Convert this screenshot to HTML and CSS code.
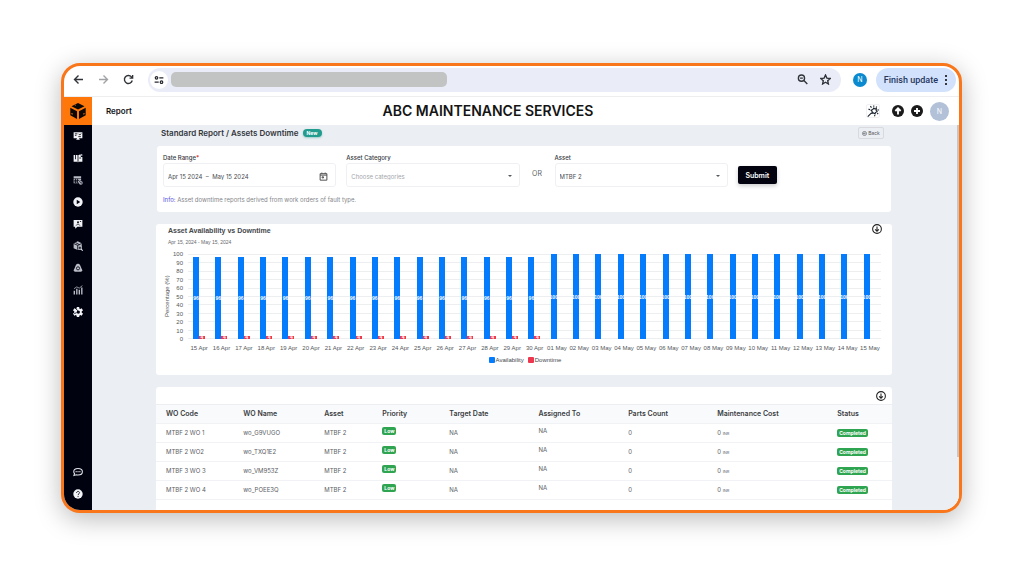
FILE: index.html
```html
<!DOCTYPE html>
<html lang="en">
<head>
  <meta charset="UTF-8">
  <meta name="viewport" content="width=device-width, initial-scale=1.0">
  <title>Assets Downtime Report</title>
  <link rel="stylesheet" href="styles.css">
</head>
<body>
  <div class="window">
    <div class="browser-bar">
      <button class="nav-btn" aria-label="Back"><svg viewBox="0 0 16 16"><path d="M14.5 8H2.5M8 2.2 2.2 8 8 13.8"/></svg></button>
      <button class="nav-btn muted" aria-label="Forward"><svg viewBox="0 0 16 16"><path d="M1.5 8h12M8 2.2 13.8 8 8 13.8"/></svg></button>
      <button class="nav-btn" aria-label="Reload"><svg viewBox="0 0 16 16"><path d="M13.5 9.5A5.8 5.8 0 1 1 12.3 4.2L14 6M14 1.5V6H9.5"/></svg></button>
      <div class="address">
        <button class="site-info" aria-label="Site information"><svg viewBox="0 0 16 16"><circle cx="4" cy="4.5" r="2"/><path d="M8.5 4.5H15M1 11.5h6.5"/><circle cx="12" cy="11.5" r="2"/></svg></button>
        <div class="url"></div>
        <button class="nav-btn" aria-label="Zoom"><svg viewBox="0 0 16 16"><circle cx="6.5" cy="6" r="4.5"/><path d="M10 9.5l5 5M4.5 6h4"/></svg></button>
        <button class="nav-btn star" aria-label="Bookmark"><svg viewBox="0 0 16 16"><path d="M8 1.5l2 4.5 4.8.5-3.6 3.2 1 4.8L8 12l-4.2 2.5 1-4.8L1.2 6.5 6 6z"/></svg></button>
      </div>
      <button class="profile">N</button>
      <button class="update">Finish update <svg viewBox="0 0 4 12"><circle cx="2" cy="2" r="1"/><circle cx="2" cy="6" r="1"/><circle cx="2" cy="10" r="1"/></svg></button>
    </div>

    <div class="app">
      <nav class="sidebar">
        <a href="#" class="logo" aria-label="Home"><svg viewBox="0 0 16 16"><path d="M8 0l6.5 3.2L8 6.6 1.5 3.2zM.3 4.8l6.700 3.5V16L.3 12.3zM15.7 4.8L9 8.3V16l6.700-3.700z"/><path class="cut" d="M4.500 2.500l1.500-1 0 1zM1 10.500l1.600-.6L2.400 12zM15 10.500l-1.600-.6.2 2.100z"/></svg></a>
        <a href="#" aria-label="Dashboard"><svg viewBox="0 0 16 16"><path d="M1 2h14v9.500H9.500L11 14H5l1.500-2.500H1z"/><path class="ink" d="M3 4.500h4M3 7h2.500M9 4.500l2 2 2-2.500M8.500 9h4"/></svg></a>
        <a href="#" aria-label="Work orders"><svg viewBox="0 0 16 16"><path d="M1 3h5l2 1 3-1.500h1.500v4H15V14H9l-1 1-1-1H1zM13 1l2.500 2-2 2z"/><path class="ink" d="M4 3v7M8 4v10M10 8h3"/></svg></a>
        <a href="#" class="dim" aria-label="Schedule"><svg viewBox="0 0 16 16"><path d="M1 2h12v3H1zM1 6h12v3a3.500 3.500 0 0 0-4 4H1z"/><circle cx="12.500" cy="12.500" r="3"/><path class="ink" d="M1 8.500h9M1 11h7M4 6v7M7 6v7M12.500 11v2h1.500"/></svg></a>
        <a href="#" aria-label="Start"><svg viewBox="0 0 16 16"><circle cx="8" cy="8" r="7.500"/><path class="hole" d="M6 4.500v7l5.500-3.500z"/></svg></a>
        <a href="#" aria-label="Requests"><svg viewBox="0 0 16 16"><path d="M1 1.500h14v11H7L3.500 15.500v-3H1z"/><circle class="hole" cx="8" cy="5" r="1.500"/><path class="ink" d="M5 10.500l3-3 3 3M11 4h2"/></svg></a>
        <a href="#" class="dim" aria-label="Assets"><svg viewBox="0 0 16 16"><path d="M7.500.5l6.500 3v5.500l-4 4-2.500 1.500-6.500-3V4z"/><circle cx="11" cy="11" r="3.500"/><path class="ink" d="M1 4l6.500 3L14 4M7.500 7v7M4 2.500L10.500 6M11 9v4M9 11h4"/><path class="line" d="M13 13l2.500 2.500"/></svg></a>
        <a href="#" class="dim" aria-label="Alerts"><svg viewBox="0 0 16 16"><path d="M8 1c3 0 4 3.500 5 6 .8 2 2 3.500 2 5.500L13 14H3l-2-1.500C1 10.500 2.200 9 3 7c1-2.500 2-6 5-6z"/><circle class="ink" cx="8" cy="8.500" r="2.500"/></svg></a>
        <a href="#" class="dim" aria-label="Reports"><svg viewBox="0 0 16 16"><path d="M1 9h2.200v6H1zM5 6h2.200v9H5zM9 7.500h2.200V15H9zM13 4h2.200v11H13z"/><path class="line thin" d="M1.500 6L6 3l4 2 5-4"/></svg></a>
        <a href="#" aria-label="Settings"><svg viewBox="0 0 16 16"><path d="M6 0h4v2.200l1.800 1L14 2l2 3.500-2 1.300v2.400l2 1.300-2 3.500-2.200-1.200-1.800 1V16H6v-2.200l-1.800-1L2 14 0 10.500l2-1.300V6.800L0 5.500 2 2l2.200 1.200 1.800-1z"/><circle class="hole" cx="8.500" cy="8" r="2.600"/><path class="ink" d="M8 6L4.500 3M6 9l-4 1.500"/></svg></a>
        <a href="#" class="push" aria-label="Chat"><svg viewBox="0 0 16 16"><path class="line" d="M8 2.500c4 0 7 2 7 5s-3 5.300-7 5.300c-1 0-2 0-2.800-.4L1.500 13.500l1-3C1.500 9.500 1.200 8.500 1.200 7.500c0-3 2.800-5 6.800-5z"/><circle cx="5" cy="7.500" r="1"/><circle cx="8" cy="7.500" r="1"/><circle cx="11" cy="7.500" r="1"/></svg></a>
        <a href="#" aria-label="Help"><svg viewBox="0 0 16 16"><circle cx="8" cy="8" r="7.500"/><path class="ink" d="M5.700 6.200C5.700 3 10.500 3.200 10.400 6c0 1.600-2.300 1.700-2.300 3.600M8.100 11v2"/></svg></a>
      </nav>

      <div class="page">
        <header class="topbar">
          <h2>Report</h2>
          <h1>ABC MAINTENANCE SERVICES</h1>
          <div class="actions">
            <button class="theme" aria-label="Theme"><svg viewBox="0 0 16 16"><path d="M9 4l1.500 1.200 2-.2-.3 2L13.500 9l-2 .8-.8 2L9 10.500l-2.200.6.200-2.300L5.500 7l2.200-.8zM9 .5v1.800M13 2l-1 1.500M15.700 6.500l-1.700.3M15 12l-1.500-1M10.500 15l-.4-1.700M4.500 1.500L6 3.500M2 5.500l2 .8M6 10.500L1 15.500"/></svg></button>
            <button class="round" aria-label="Upload"><svg viewBox="0 0 16 16"><circle cx="8" cy="8" r="8"/><path d="M8 12.500V5M4.500 8L8 4.500 11.500 8"/></svg></button>
            <button class="round" aria-label="Add"><svg viewBox="0 0 16 16"><circle cx="8" cy="8" r="8"/><path d="M8 4v8M4 8h8"/></svg></button>
            <button class="avatar">N</button>
          </div>
        </header>

        <main class="content">
          <div class="title-row">
            <h3>Standard Report / Assets Downtime</h3>
            <span class="badge new">New</span>
            <button class="back"><svg viewBox="0 0 16 16"><circle cx="8" cy="8" r="6.500"/><path d="M11.500 8H5M8 5L5 8l3 3"/></svg>Back</button>
          </div>

          <form class="card filters">
            <div class="fields">
              <div class="field">
                <label for="range">Date Range<b>*</b></label>
                <div class="box">
                  <input id="range" type="text" value="Apr 15 2024  –  May 15 2024">
                  <svg class="calendar" viewBox="0 0 16 16"><path d="M2 3h12v11.500H2zM2 5.500h12M5 1v2M11 1v2"/><path d="M5.500 8.500h2.500v2H5.500z"/></svg>
                </div>
              </div>
              <div class="field">
                <label for="category">Asset Category</label>
                <div class="box">
                  <select id="category" class="placeholder"><option>Choose categories</option></select>
                  <span class="caret"></span>
                </div>
              </div>
              <span class="or">OR</span>
              <div class="field">
                <label for="asset">Asset</label>
                <div class="box">
                  <select id="asset"><option>MTBF 2</option></select>
                  <span class="caret"></span>
                </div>
              </div>
              <button class="submit" type="button">Submit</button>
            </div>
            <p class="info"><em>Info:</em> Asset downtime reports derived from work orders of fault type.</p>
          </form>

          <section class="card chart-card">
            <div class="chart-head">
              <h4>Asset Availability vs Downtime</h4>
              <button class="download" aria-label="Download chart"><svg viewBox="0 0 16 16"><circle cx="8" cy="8" r="7"/><path d="M8 4v7M5 8.500l3 3 3-3"/></svg></button>
            </div>
            <p class="period">Apr 15, 2024 - May 15, 2024</p>
            <div class="chart">
              <span class="axis-title">Percentage (%)</span>
              <div class="y-axis" id="yAxis"></div>
              <div class="plot">
                <div class="grid-lines" id="gridLines"></div>
                <div class="columns" id="columns"></div>
              </div>
              <div class="x-axis" id="xAxis"></div>
            </div>
            <div class="legend">
              <span><i class="up"></i>Availability</span>
              <span><i class="down"></i>Downtime</span>
            </div>
          </section>

          <section class="card table-card">
            <div class="table-head">
              <button class="download" aria-label="Download table"><svg viewBox="0 0 16 16"><circle cx="8" cy="8" r="7"/><path d="M8 4v7M5 8.500l3 3 3-3"/></svg></button>
            </div>
            <table>
              <thead>
                <tr>
                  <th class="c-code">WO Code</th>
                  <th class="c-name">WO Name</th>
                  <th class="c-asset">Asset</th>
                  <th class="c-priority">Priority</th>
                  <th class="c-target">Target Date</th>
                  <th class="c-assigned">Assigned To</th>
                  <th class="c-parts">Parts Count</th>
                  <th class="c-cost">Maintenance Cost</th>
                  <th class="c-status">Status</th>
                </tr>
              </thead>
              <tbody>
                <tr><td>MTBF 2 WO 1</td><td>wo_G9VUGO</td><td>MTBF 2</td><td class="raised"><span class="badge">Low</span></td><td>NA</td><td class="raised">NA</td><td>0</td><td>0 <small>INR</small></td><td><span class="badge">Completed</span></td></tr>
                <tr><td>MTBF 2 WO2</td><td>wo_TXQ1E2</td><td>MTBF 2</td><td class="raised"><span class="badge">Low</span></td><td>NA</td><td class="raised">NA</td><td>0</td><td>0 <small>INR</small></td><td><span class="badge">Completed</span></td></tr>
                <tr><td>MTBF 3 WO 3</td><td>wo_VM953Z</td><td>MTBF 2</td><td class="raised"><span class="badge">Low</span></td><td>NA</td><td class="raised">NA</td><td>0</td><td>0 <small>INR</small></td><td><span class="badge">Completed</span></td></tr>
                <tr><td>MTBF 2 WO 4</td><td>wo_POEE3Q</td><td>MTBF 2</td><td class="raised"><span class="badge">Low</span></td><td>NA</td><td class="raised">NA</td><td>0</td><td>0 <small>INR</small></td><td><span class="badge">Completed</span></td></tr>
              </tbody>
            </table>
          </section>
        </main>
      </div>
    </div>
  </div>

  <script src="script.js"></script>
</body>
</html>
```
FILE: styles.css
```css
* {
  box-sizing: border-box;
}

body {
  margin: 0;
  height: 100vh;
  padding: 63px 62px 63px 61px;
  font-family: Inter, "Open Sans", sans-serif;
  font-size: 6px;
  color: #33373d;
  background-color: #fff;
}

h1, h2, h3, h4, p {
  margin: 0;
}

button {
  display: flex;
  align-items: center;
  justify-content: center;
  padding: 0;
  border: 0;
  background: none;
  font-family: inherit;
  cursor: pointer;
}

svg {
  display: block;
}

.window {
  height: 100%;
  display: flex;
  flex-direction: column;
  overflow: hidden;
  border: 3px solid #f9761a;
  border-radius: 19px;
  background-color: #fff;
  box-shadow: 0 6px 26px rgba(0, 0, 0, 0.27);
}

/* Browser toolbar */
.browser-bar {
  display: flex;
  align-items: center;
  flex-shrink: 0;
  height: 31px;
  padding: 0 3px 3px 9px;
  border-bottom: 1px solid #eeeef0;
}

.nav-btn {
  width: 11px;
  height: 11px;
  margin-right: 14px;
}

.nav-btn svg {
  width: 11px;
  height: 11px;
  fill: none;
  stroke: #303338;
  stroke-width: 2;
}

.nav-btn.muted svg {
  stroke: #a2a3a6;
}

.address {
  display: flex;
  align-items: center;
  flex: 1;
  height: 24px;
  padding-left: 2px;
  border-radius: 12px;
  background-color: #eaedf8;
}

.site-info {
  width: 18px;
  height: 18px;
  border-radius: 50%;
  background-color: #fff;
}

.site-info svg {
  width: 10px;
  height: 10px;
  fill: none;
  stroke: #25282d;
  stroke-width: 2;
}

.url {
  width: 40%;
  height: 15px;
  margin: 0 auto 0 3px;
  border-radius: 5px;
  background-color: #c2c4c3;
}

.address .nav-btn {
  margin-right: 12px;
}

.address .star {
  margin-right: 10px;
}

.profile {
  width: 14px;
  height: 14px;
  margin: 0 9px 0 12px;
  border-radius: 50%;
  background-color: #0b8ad0;
  color: #fff;
  font-size: 7px;
}

.update {
  gap: 6px;
  height: 24px;
  padding: 0 8px;
  border-radius: 12px;
  background-color: #d3e2fc;
  color: #25375e;
  font-family: Roboto, sans-serif;
  font-size: 9px;
  font-weight: 500;
}

.update svg {
  width: 4px;
  height: 12px;
}

/* App shell */
.app {
  display: flex;
  flex: 1;
  min-height: 0;
}

.sidebar {
  display: flex;
  flex-direction: column;
  flex-shrink: 0;
  width: 28px;
  padding-bottom: 5px;
  background-color: #01020f;
}

.sidebar a {
  display: flex;
  align-items: center;
  justify-content: center;
  height: 22px;
}

.sidebar svg {
  width: 10px;
  height: 10px;
  fill: #f1f3f7;
}

.sidebar .dim svg {
  fill: #b9bdc6;
}

.sidebar .ink {
  fill: none;
  stroke: #01020f;
  stroke-width: 1.3;
}

.sidebar .hole {
  fill: #01020f;
}

.sidebar .line {
  fill: none;
  stroke: #e4e6eb;
  stroke-width: 1.7;
}

.sidebar .thin {
  stroke-width: 1;
}

.sidebar .push {
  margin-top: auto;
}

.sidebar .logo {
  height: 28px;
  background-color: #ff7708;
}

.sidebar .logo svg {
  width: 16px;
  height: 16px;
  fill: #0b0806;
}

.sidebar .logo .cut {
  fill: #ff7708;
}

.page {
  display: flex;
  flex-direction: column;
  flex: 1;
  min-width: 0;
}

.topbar {
  display: grid;
  grid-template-columns: 7fr auto 9fr;
  align-items: center;
  flex-shrink: 0;
  height: 28px;
  padding: 0 10px 0 14px;
  color: #141414;
}

.topbar h2 {
  font-size: 8px;
  font-weight: 600;
}

.topbar h1 {
  font-size: 14px;
  font-weight: 600;
  line-height: 18px;
}

.actions {
  display: flex;
  align-items: center;
  justify-content: flex-end;
  gap: 7px;
}

.theme {
  width: 14px;
  height: 14px;
  margin-right: 5px;
  border: 1px solid #f1f1f4;
  border-radius: 2px;
}

.theme svg {
  width: 12px;
  height: 12px;
  flex-shrink: 0;
  fill: none;
  stroke: #1c2530;
  stroke-width: 1.5;
}

.round svg {
  width: 12px;
  height: 12px;
  fill: #1b1b1b;
}

.round path {
  fill: none;
  stroke: #fff;
  stroke-width: 2.5;
}

.avatar {
  width: 19px;
  height: 19px;
  border-radius: 50%;
  background-color: #b2c1d7;
  color: #f1f5fa;
  font-size: 7px;
  font-weight: 500;
}

.content {
  flex: 1;
  min-height: 0;
  overflow: hidden;
  padding: 0 65px 0 64px;
  border-right: 2px solid #c4c7ca;
  border-image: linear-gradient(#c4c7ca 86%, #ebeef2 86%) 1;
  background-color: #ebeef2;
}

.card {
  border-radius: 3px;
  background-color: #fff;
}

.badge {
  display: inline-block;
  padding: 0 2px;
  border-radius: 2px;
  background-color: #2fa551;
  color: #fff;
  font-size: 5px;
  font-weight: 700;
  line-height: 8px;
}

/* Title and filters */
.title-row {
  display: flex;
  align-items: center;
  gap: 4px;
  height: 16px;
  padding: 0 8px 0 5px;
}

.title-row h3 {
  font-size: 8px;
  font-weight: 600;
}

.badge.new {
  padding: 0 4px;
  border-radius: 5px;
  background-color: #229c8e;
  box-shadow: 0 1px 2px rgba(34, 156, 142, 0.4);
}

.back {
  gap: 1px;
  width: 26px;
  height: 12px;
  margin-left: auto;
  border: 1px solid #d8dadd;
  border-radius: 2px;
  color: #55585d;
  font-size: 5px;
}

.back svg {
  width: 5px;
  height: 5px;
  fill: none;
  stroke: #55585d;
  stroke-width: 2;
}

.filters {
  height: 66px;
  margin: 5px 1px 12px;
  padding: 7px 6px;
}

.fields {
  display: flex;
  align-items: flex-end;
  gap: 10px;
}

.field {
  width: 24%;
}

.field label {
  display: block;
  line-height: 10px;
  font-weight: 500;
}

.field label b {
  color: #e5383b;
}

.box {
  display: flex;
  align-items: center;
  height: 24px;
  padding: 2px 7px 0 4px;
  border: 1px solid #eff0f3;
  border-radius: 3px;
}

.box input,
.box select {
  flex: 1;
  min-width: 0;
  padding: 0;
  border: 0;
  outline: 0;
  appearance: none;
  background: none;
  color: #4a4d52;
  font-family: inherit;
  font-size: 6px;
  white-space: pre;
}

.box .placeholder {
  color: #a3a6ab;
}

.calendar {
  width: 9px;
  height: 9px;
  fill: none;
  stroke: #4a4a4a;
  stroke-width: 1.7;
}

.caret {
  border: 2px solid transparent;
  border-top-color: #55585d;
  border-bottom: 0;
}

.or {
  width: 15px;
  line-height: 26px;
  color: #5c5f64;
  font-size: 7px;
  text-align: center;
}

.submit {
  width: 39px;
  height: 18px;
  margin-bottom: 3px;
  border-radius: 2px;
  background-color: #02030f;
  box-shadow: 0 2px 4px rgba(2, 3, 15, 0.2);
  color: #fff;
  font-size: 7px;
  font-weight: 600;
}

.info {
  margin-top: 8px;
  color: #83868b;
  font-size: 6px;
  line-height: 10px;
}

.info em {
  color: #5a4be0;
  font-style: normal;
}

/* Chart */
.chart-card {
  height: 151px;
  margin-bottom: 12px;
  padding: 0 10px 0 12px;
  font-family: "Liberation Sans", Arial, sans-serif;
}

.chart-head {
  display: flex;
  align-items: flex-start;
  justify-content: space-between;
  height: 14px;
}

.chart-head h4 {
  font-size: 7px;
  font-weight: 700;
  line-height: 14px;
  color: #45484c;
}

.download svg {
  width: 10px;
  height: 10px;
  fill: none;
  stroke: #222;
  stroke-width: 1.7;
}

.period {
  color: #66696d;
  font-size: 5px;
  line-height: 8px;
}

.chart {
  display: grid;
  grid-template-columns: 7px 14px 1fr;
  grid-template-rows: 85px 18px;
  margin: 8px 1px 0 -4px;
  color: #54575b;
}

.axis-title {
  writing-mode: vertical-rl;
  transform: rotate(180deg);
  text-align: center;
  line-height: 7px;
}

.y-axis {
  display: flex;
  flex-direction: column;
  justify-content: space-between;
  align-items: flex-end;
  margin: -3px 0;
  padding-right: 2px;
  font-size: 6px;
  line-height: 6px;
}

.plot {
  display: grid;
  margin-left: 3px;
}

.grid-lines,
.columns {
  grid-area: 1 / 1;
}

.grid-lines {
  display: flex;
  flex-direction: column;
  justify-content: space-between;
}

.grid-lines span {
  height: 1px;
  background-color: #eceef0;
}

.columns {
  display: flex;
}

.column {
  display: flex;
  align-items: flex-end;
  flex: 1;
  min-width: 0;
  padding-left: 5px;
}

.bar {
  display: flex;
  align-items: center;
  justify-content: center;
  width: 6px;
  overflow: hidden;
  color: #fff;
  font-size: 5px;
  font-weight: 700;
  line-height: 4px;
}

.bar.up,
.legend .up {
  background-color: #057cfb;
}

.bar.down,
.legend .down {
  background-color: #ee374f;
}

.x-axis {
  display: flex;
  grid-column: 3;
  margin-left: 3px;
}

.x-axis span {
  flex: 1;
  min-width: 0;
  text-align: center;
  white-space: nowrap;
  line-height: 19px;
}

.legend {
  display: flex;
  justify-content: center;
  gap: 4px;
  line-height: 6px;
  color: #45484c;
}

.legend span {
  display: flex;
  gap: 1px;
}

.legend i {
  width: 6px;
  height: 6px;
  border-radius: 1px;
}

/* Work orders table */
.table-card {
  height: 140px;
}

.table-head {
  display: flex;
  align-items: center;
  justify-content: flex-end;
  height: 17px;
  padding-right: 6px;
}

table {
  width: 100%;
  table-layout: fixed;
  border-collapse: collapse;
  color: #5b5e64;
}

th,
td {
  height: 19px;
  padding: 0 0 0 10px;
  border-bottom: 1px solid #f1f2f5;
  text-align: left;
  white-space: nowrap;
  line-height: 8px;
}

th {
  border-top: 1px solid #eceef1;
  background-color: #f9fafc;
  color: #3a3d42;
  font-size: 7px;
  font-weight: 600;
}

td small {
  font-size: 4px;
}

td.raised {
  padding-bottom: 4px;
}

.c-code { width: 10.5%; }
.c-name { width: 11%; }
.c-asset { width: 7.9%; }
.c-priority { width: 9.1%; }
.c-target { width: 12.1%; }
.c-assigned { width: 12.2%; }
.c-parts { width: 12.1%; }
.c-cost { width: 16.3%; }
.c-status { width: 8.8%; }
```
FILE: script.js
```js
const days = [];
for (let d = 15; d <= 30; d++) {
  days.push({ label: d + ' Apr', up: 96, down: 4 });
}
for (let d = 1; d <= 15; d++) {
  days.push({ label: String(d).padStart(2, '0') + ' May', up: 100, down: 0 });
}

const yAxis = document.getElementById('yAxis');
const gridLines = document.getElementById('gridLines');
for (let value = 100; value >= 0; value -= 10) {
  yAxis.innerHTML += `<span>${value}</span>`;
  gridLines.innerHTML += '<span></span>';
}

function bar(kind, value) {
  return value ? `<div class="bar ${kind}" style="height: ${value}%">${value}</div>` : '';
}

document.getElementById('columns').innerHTML = days
  .map(day => `<div class="column">${bar('up', day.up)}${bar('down', day.down)}</div>`)
  .join('');
document.getElementById('xAxis').innerHTML = days.map(day => `<span>${day.label}</span>`).join('');
```
